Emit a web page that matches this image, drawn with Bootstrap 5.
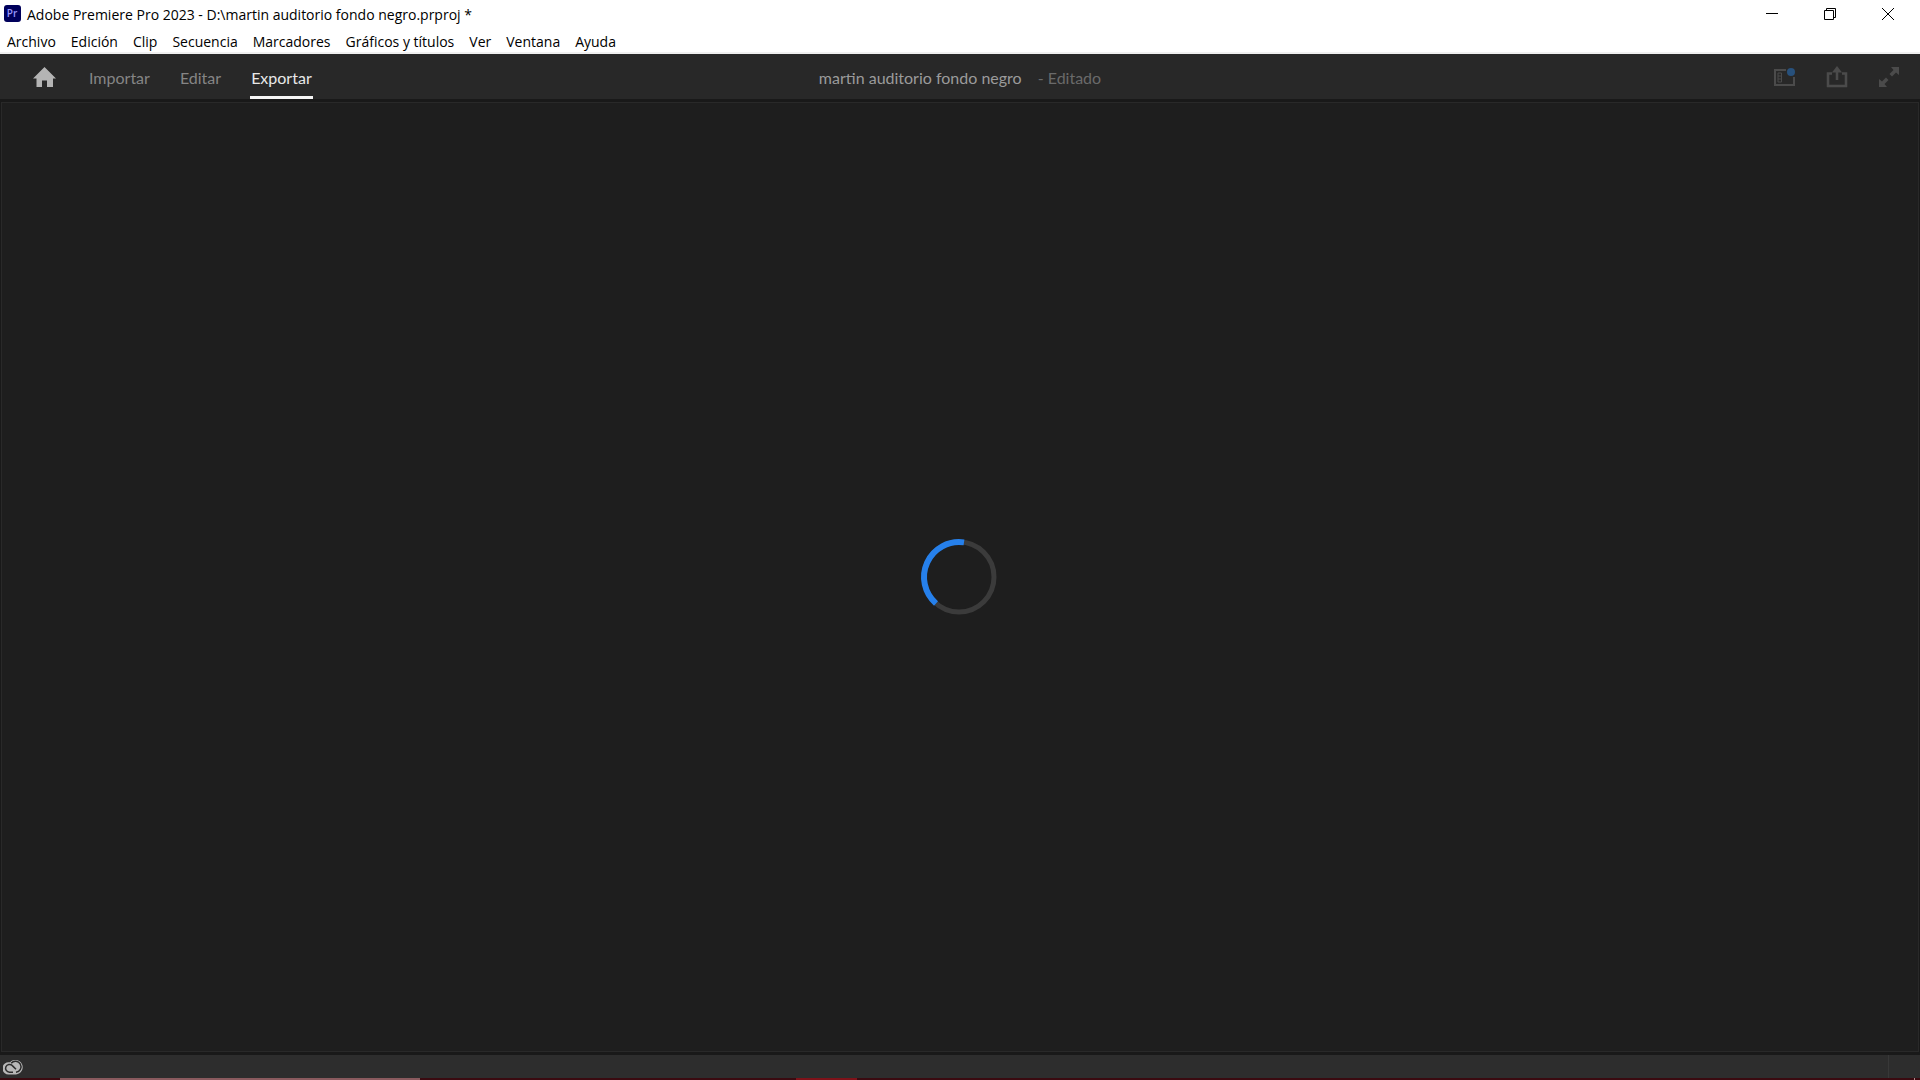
<!DOCTYPE html>
<html lang="es">
<head>
<meta charset="utf-8">
<meta name="viewport" content="width=device-width, initial-scale=1">
<title>Adobe Premiere Pro 2023</title>
<link href="https://cdn.jsdelivr.net/npm/bootstrap@5.3.0/dist/css/bootstrap.min.css" rel="stylesheet">
<style>
body { font-family: "Open Sans", "Noto Sans", sans-serif; font-size: 14px; line-height: 20px; background: #1e1e1e; }
svg { display: block; }
button { background: none; border: 0; padding: 0; color: inherit; }
.app-shell { height: 100vh; }
.title-bar { height: 28px; padding: 0 3px; background: #fff; color: #000; }
.title-text { padding: 2px 0 0 6px; }
.win-btn { width: 58px; height: 28px; }
.menu-bar { height: 26px; padding: 3px 7px 0; gap: 15px; background: #fff; border-bottom: 2px solid #f0f0f0; }
.menu-bar a { color: #000; text-decoration: none; }
.mode-bar { height: 45px; padding: 0 20px; background: #282828; font-family: Lato, "Open Sans", sans-serif; font-size: 16px; }
.mode-bar .side { flex: 1 1 0; }
.home-btn { margin: 0 31px 0 13px; }
.mode-tabs { gap: 28px; }
.mode-tabs a { height: 45px; line-height: 48px; color: #858585; text-decoration: none; border-bottom: 3px solid transparent; padding: 0 1px; }
.mode-tabs a.active { color: #e8e8e8; border-color: #f5f5f5; }
.project-title { padding-top: 2px; }
.project-name { color: #9b9b9b; }
.project-state { color: #6a6a6a; }
.tool-icons { gap: 30px; color: #4b4b4b; }
.work-area { background: #1e1e1e; border: 1px solid #292929; margin: 3px 1px; }
.frame-area { background: #191919; }
.load-ring { overflow: visible; }
.status-bar { height: 23px; background: #2d2d2d; padding-left: 3px; }
.status-end { width: 32px; border-left: 1px solid #383838; }
.task-edge { height: 2px; background: #3a0a10; }
.task-search { width: 360px; margin-left: 60px; background: #8a5a5e; }
.task-active { width: 61px; margin-left: 376px; background: #7f1219; }
.task-corner { width: 1px; margin-right: 5px; background: #b08a8c; }
</style>
<script src="https://cdn.jsdelivr.net/npm/bootstrap@5.3.0/dist/js/bootstrap.bundle.min.js"></script>
</head>
<body>
<div class="app-shell d-flex flex-column overflow-hidden">
  <header class="title-bar d-flex align-items-center">
    <svg width="18" height="18" viewBox="0 0 18 18" aria-hidden="true"><rect x="1" y="0" width="17" height="17" rx="3" fill="#00005b"/><text x="9" y="12" text-anchor="middle" font-size="10" font-weight="600" fill="#9999ff">Pr</text></svg>
    <span class="title-text me-auto">Adobe Premiere Pro 2023 - D:\martin auditorio fondo negro.prproj *</span>
    <button class="win-btn d-flex align-items-center justify-content-center" aria-label="Minimizar"><svg width="12" height="12" viewBox="0 0 12 12"><path d="M0 5.500H12" stroke="#000"/></svg></button>
    <button class="win-btn d-flex align-items-center justify-content-center" aria-label="Restaurar"><svg width="12" height="12" viewBox="0 0 12 12" fill="none" stroke="#000"><path d="M.5 2.500H9.500V11.500H.5ZM2.500 2.500V.5H11.500V9.500H9.500"/></svg></button>
    <button class="win-btn d-flex align-items-center justify-content-center" aria-label="Cerrar"><svg width="12" height="12" viewBox="0 0 12 12"><path d="M0 0L12 12M12 0L0 12" stroke="#000"/></svg></button>
  </header>
  <nav class="menu-bar d-flex align-items-center" aria-label="Menú">
    <a href="#">Archivo</a><a href="#">Edición</a><a href="#">Clip</a><a href="#">Secuencia</a><a href="#">Marcadores</a><a href="#">Gráficos y títulos</a><a href="#">Ver</a><a href="#">Ventana</a><a href="#">Ayuda</a>
  </nav>
  <div class="mode-bar d-flex align-items-center">
    <div class="side d-flex align-items-center">
      <button class="home-btn" aria-label="Inicio"><svg width="24" height="22" viewBox="0 0 24 22" fill="#b4b4b4"><path d="M11.500 1L16 5.500L23 12.500H20V21H14V14.500H9V21H3.500V12.500H0Z"/></svg></button>
      <nav class="mode-tabs d-flex" aria-label="Modos"><a href="#">Importar</a><a href="#">Editar</a><a href="#" class="active" aria-current="page">Exportar</a></nav>
    </div>
    <div class="project-title d-flex"><span class="project-name me-3">martin auditorio fondo negro</span><span class="project-state">- Editado</span></div>
    <div class="side tool-icons d-flex align-items-center justify-content-end">
      <button aria-label="Espacios de trabajo"><svg width="22" height="20" viewBox="0 0 22 20" fill="none" stroke="currentColor"><path d="M12 3H1V18H20V10" stroke-width="2"/><path d="M4 6H7.500V15H4ZM4 9H7.500M4 12H7.500" stroke-width="1"/><circle cx="17" cy="5" r="4" fill="#28517c" stroke="none"/></svg></button>
      <button aria-label="Exportación rápida"><svg width="22" height="22" viewBox="0 0 22 22" fill="none" stroke="currentColor" stroke-width="2.500"><path d="M6 7.500H2V20H20V7.500H16M11 14V4"/><path d="M6 6.500L11 0L16 6.500Z" fill="currentColor" stroke="none"/></svg></button>
      <button aria-label="Pantalla completa"><svg width="22" height="22" viewBox="0 0 22 22" fill="currentColor"><path d="M21 1V9L18 6.500L14 10.500L11.500 8L15.500 4L13 1ZM1 21V13L4 15.500L8 11.500L10.500 14L6.500 18L9 21Z"/></svg></button>
    </div>
  </div>
  <div class="frame-area flex-grow-1 d-flex flex-column">
    <main class="work-area flex-grow-1 d-flex align-items-center justify-content-center">
      <svg class="load-ring" width="76" height="76" viewBox="0 0 76 76" fill="none" role="img" aria-label="Cargando"><circle cx="37" cy="38" r="35" stroke="#3b3b3b" stroke-width="5"/><path d="M14 64.400A35 35 0 0 1 42 3.400" stroke="#2680eb" stroke-width="6"/></svg>
    </main>
  </div>
  <footer class="status-bar d-flex align-items-center justify-content-between">
    <button aria-label="Creative Cloud"><svg width="22" height="16" viewBox="0 0 22 16" fill="none"><path d="M6.500 15.500A6.200 6.200 0 1 1 7 3.300A7.300 7.300 0 1 1 13 15.500Z" fill="#b8b8b8"/><path d="M10 13.200H6.500A3.900 3.900 0 1 1 9.300 6.600L13 10.200M8.200 4.300A5.500 5.500 0 1 1 13 13.200" stroke="#2d2d2d" stroke-width="1.500"/></svg></button>
    <span class="status-end h-100"></span>
  </footer>
  <div class="task-edge d-flex"><span class="task-search"></span><span class="task-active me-auto"></span><span class="task-corner"></span></div>
</div>
</body>
</html>
